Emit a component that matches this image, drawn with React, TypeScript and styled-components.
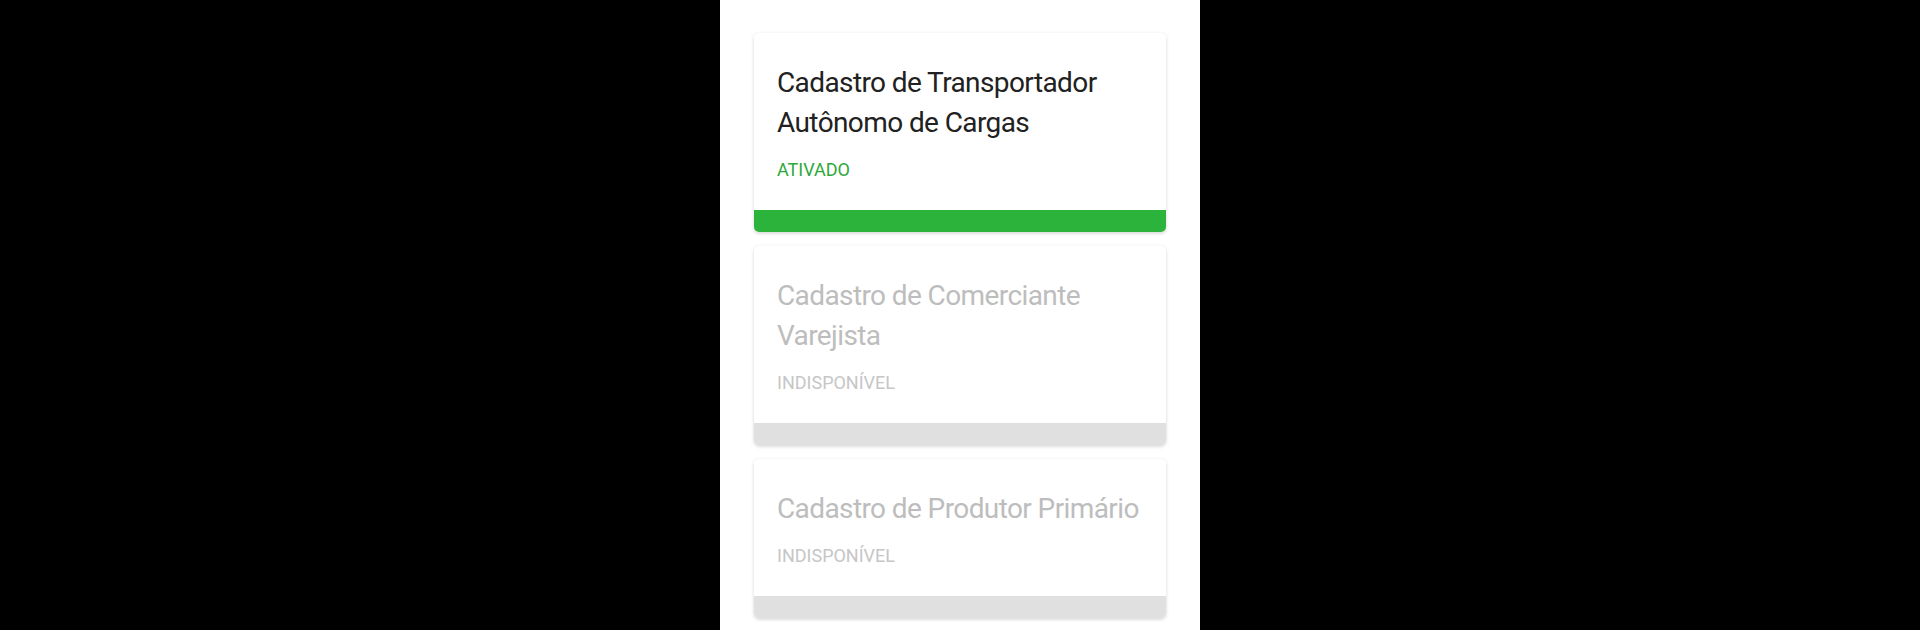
import * as React from 'react';
import styled, { createGlobalStyle } from 'styled-components';

type Item = {
  title: string;
  active: boolean;
};

const items: Item[] = [
  { title: 'Cadastro de Transportador Autônomo de Cargas', active: true },
  { title: 'Cadastro de Comerciante Varejista', active: false },
  { title: 'Cadastro de Produtor Primário', active: false },
];

export default function App() {
  return (
    <>
      <GlobalStyle />
      <Page>
        <Screen>
          <List>
            {items.map((item) => (
              <Card key={item.title}>
                <CardBody>
                  <Title active={item.active}>{item.title}</Title>
                  <Status active={item.active}>{item.active ? 'ATIVADO' : 'INDISPONÍVEL'}</Status>
                </CardBody>
                <Bar active={item.active} />
              </Card>
            ))}
          </List>
        </Screen>
      </Page>
    </>
  );
}

const GlobalStyle = createGlobalStyle`
  html, body {
    margin: 0;
    padding: 0;
    background: #000;
    font-family: Roboto, "Noto Sans", "Liberation Sans", sans-serif;
  }
`;

const Page = styled.div`
  display: flex;
  justify-content: center;
  height: 630px;
  overflow: hidden;
  background: #000;
`;

const Screen = styled.div`
  width: 480px;
  height: 100%;
  background: #fff;
  padding: 33px 34px 0;
  box-sizing: border-box;
`;

const List = styled.div`
  display: flex;
  flex-direction: column;
  gap: 14px;
`;

const Card = styled.div`
  display: flex;
  flex-direction: column;
  background: #fff;
  border-radius: 5px;
  overflow: hidden;
  box-shadow: 0 1px 4px rgba(0, 0, 0, 0.12), 0 2px 3px rgba(0, 0, 0, 0.06);
`;

const CardBody = styled.div`
  display: flex;
  flex-direction: column;
  gap: 15px;
  padding: 30px 18px 28px 23px;
`;

const Title = styled.div<{ active: boolean }>`
  font-size: 28px;
  line-height: 40px;
  font-weight: 400;
  letter-spacing: -0.6px;
  color: ${(p) => (p.active ? '#212121' : '#bdbdbd')};
`;

const Status = styled.div<{ active: boolean }>`
  font-size: 18px;
  line-height: 24px;
  font-weight: 400;
  color: ${(p) => (p.active ? '#2ea83a' : '#c6c6c6')};
`;

const Bar = styled.div<{ active: boolean }>`
  height: 22px;
  background: ${(p) => (p.active ? '#2bb33c' : '#e0e0e0')};
`;
